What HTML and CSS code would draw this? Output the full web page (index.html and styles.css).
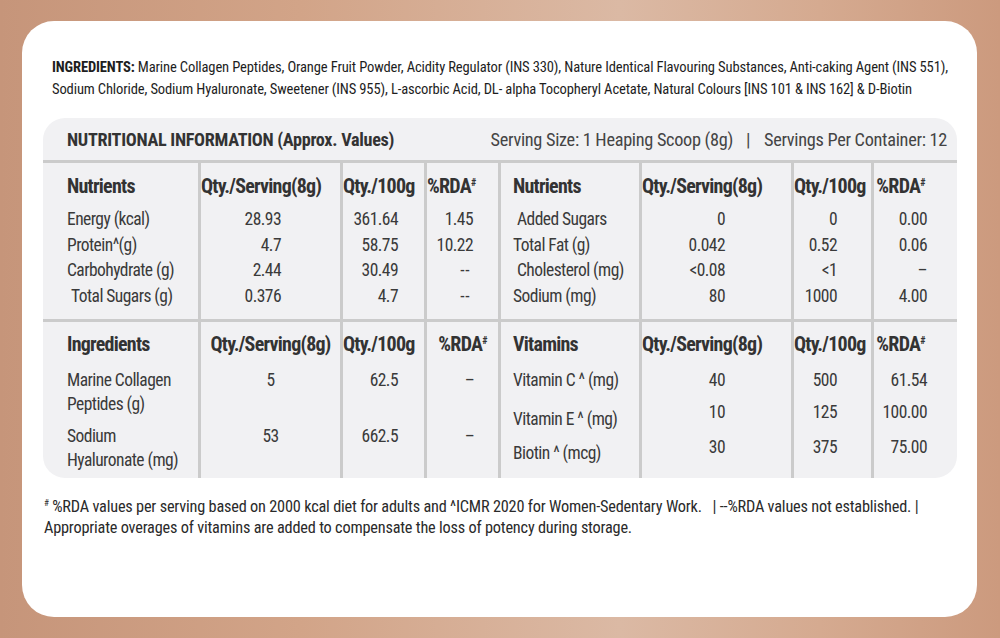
FILE: index.html
```html
<!DOCTYPE html>
<html lang="en">
<head>
<meta charset="utf-8">
<title>Nutritional Information</title>
<link rel="stylesheet" href="styles.css">
</head>
<body>
<div class="card">
  <div class="ingredients">
    <span class="line"><b>INGREDIENTS:</b> Marine Collagen Peptides, Orange Fruit Powder, Acidity Regulator (INS 330), Nature Identical Flavouring Substances, Anti-caking Agent (INS 551),</span>
    <span class="line">Sodium Chloride, Sodium Hyaluronate, Sweetener (INS 955), L-ascorbic Acid, DL- alpha Tocopheryl Acetate, Natural Colours [INS 101 &amp; INS 162] &amp; D-Biotin</span>
  </div>

  <div class="panel">
    <div class="panel-head">
      <span class="title">NUTRITIONAL INFORMATION (Approx. Values)</span>
      <span class="serving">Serving Size: 1 Heaping Scoop (8g) <span class="sep">|</span> Servings Per Container: 12</span>
    </div>

    <div class="section s1">
      <div class="col lbl first">
        <div class="h">Nutrients</div>
        <div class="r">Energy (kcal)</div>
        <div class="r">Protein^(g)</div>
        <div class="r">Carbohydrate (g)</div>
        <div class="r ind">Total Sugars (g)</div>
      </div>
      <div class="col val c-q1">
        <div class="h">Qty./Serving(8g)</div>
        <div class="r">28.93</div>
        <div class="r">4.7</div>
        <div class="r">2.44</div>
        <div class="r">0.376</div>
      </div>
      <div class="col val c-h1">
        <div class="h">Qty./100g</div>
        <div class="r">361.64</div>
        <div class="r">58.75</div>
        <div class="r">30.49</div>
        <div class="r">4.7</div>
      </div>
      <div class="col val c-d1">
        <div class="h">%RDA<sup>#</sup></div>
        <div class="r">1.45</div>
        <div class="r">10.22</div>
        <div class="r dash">--</div>
        <div class="r dash">--</div>
      </div>
      <div class="col lbl second">
        <div class="h">Nutrients</div>
        <div class="r ind">Added Sugars</div>
        <div class="r">Total Fat (g)</div>
        <div class="r ind">Cholesterol (mg)</div>
        <div class="r">Sodium (mg)</div>
      </div>
      <div class="col val c-q2">
        <div class="h">Qty./Serving(8g)</div>
        <div class="r">0</div>
        <div class="r">0.042</div>
        <div class="r">&lt;0.08</div>
        <div class="r">80</div>
      </div>
      <div class="col val c-h2">
        <div class="h">Qty./100g</div>
        <div class="r">0</div>
        <div class="r">0.52</div>
        <div class="r">&lt;1</div>
        <div class="r">1000</div>
      </div>
      <div class="col val c-d2">
        <div class="h">%RDA<sup>#</sup></div>
        <div class="r">0.00</div>
        <div class="r">0.06</div>
        <div class="r">&ndash;</div>
        <div class="r">4.00</div>
      </div>
    </div>

    <div class="section s2">
      <div class="col lbl first">
        <div class="h">Ingredients</div>
        <div class="blk">Marine Collagen<br>Peptides (g)</div>
        <div class="blk">Sodium<br>Hyaluronate (mg)</div>
      </div>
      <div class="col val center">
        <div class="h">Qty./Serving(8g)</div>
        <div class="blk">5</div>
        <div class="blk">53</div>
      </div>
      <div class="col val c-h1">
        <div class="h">Qty./100g</div>
        <div class="blk">62.5</div>
        <div class="blk">662.5</div>
      </div>
      <div class="col val center rda-dash">
        <div class="h">%RDA<sup>#</sup></div>
        <div class="blk">&ndash;</div>
        <div class="blk">&ndash;</div>
      </div>
      <div class="col lbl second">
        <div class="h">Vitamins</div>
        <div class="vl vl-a">Vitamin C ^ (mg)</div>
        <div class="vl vl-b">Vitamin E ^ (mg)</div>
        <div class="vl">Biotin ^ (mcg)</div>
      </div>
      <div class="col val c-q2">
        <div class="h">Qty./Serving(8g)</div>
        <div class="vv vv-a">40</div>
        <div class="vv vv-b">10</div>
        <div class="vv">30</div>
      </div>
      <div class="col val c-h2">
        <div class="h">Qty./100g</div>
        <div class="vv vv-a">500</div>
        <div class="vv vv-b">125</div>
        <div class="vv">375</div>
      </div>
      <div class="col val c-d2">
        <div class="h">%RDA<sup>#</sup></div>
        <div class="vv vv-a">61.54</div>
        <div class="vv vv-b">100.00</div>
        <div class="vv">75.00</div>
      </div>
    </div>
  </div>

  <div class="note">
    <span class="line"><sup>#</sup> %RDA values per serving based on 2000 kcal diet for adults and ^ICMR 2020 for Women-Sedentary Work. &nbsp;&nbsp;| --%RDA values not established. |</span>
    <span class="line">Appropriate overages of vitamins are added to compensate the loss of potency during storage.</span>
  </div>
</div>
</body>
</html>
```

FILE: styles.css
```css
html, body {
  margin: 0;
  padding: 0;
}

body {
  width: 1000px;
  height: 638px;
  overflow: hidden;
  background: linear-gradient(90deg, #c6957a 0%, #d2a488 30%, #dbb9a4 62%, #d5aa90 82%, #cc9a7e 100%);
  font-family: "Noto Sans Condensed", "Roboto Condensed", "Open Sans Condensed", "DejaVu Sans Condensed", sans-serif;
  color: #333;
  padding-top: 21px;
  box-sizing: border-box;
}

.card {
  margin-left: 22px;
  width: 955px;
  height: 596px;
  background: #fff;
  border-radius: 32px;
  box-sizing: border-box;
  padding-top: 35px;
}

.ingredients {
  padding-left: 30px;
  font-size: 14.6px;
  line-height: 22px;
  color: #1e1e1e;
  letter-spacing: -0.15px;
}

.ingredients b {
  font-weight: bold;
}

.line {
  display: block;
  white-space: nowrap;
}

.panel {
  margin: 18px 0 0 21px;
  width: 914px;
  height: 360px;
  background: #f1f1f3;
  border-radius: 22px;
  overflow: hidden;
}

.panel-head {
  height: 42px;
  border-bottom: 3px solid #cbcbcb;
  display: flex;
  align-items: center;
  justify-content: space-between;
  padding: 0 9px 0 24px;
  white-space: nowrap;
}

.title {
  font-weight: bold;
  font-size: 18.2px;
  letter-spacing: -0.3px;
  color: #333;
}

.serving {
  font-size: 18.3px;
  letter-spacing: -0.3px;
  color: #444;
  padding-right: 1px;
}

.sep {
  margin: 0 10px 0 9px;
}

.section {
  display: grid;
  grid-template-columns: 155px 142px 84px 74px 141px 152px 80px 86px;
  font-size: 17.5px;
  letter-spacing: -0.55px;
  color: #3a3a3a;
}

.s1 {
  height: 156px;
  border-bottom: 3px solid #cbcbcb;
}

.s2 {
  height: 156px;
}

.col {
  border-left: 3px solid #cbcbcb;
  padding-top: 10px;
  white-space: nowrap;
}

.s2 .col {
  padding-top: 9px;
}

.col.first {
  border-left: none;
  padding-left: 24px;
}

.col.second {
  padding-left: 12px;
}

.h {
  line-height: 26px;
  font-size: 20px;
  font-weight: bold;
  color: #333;
  text-align: center;
  margin-bottom: 8px;
  letter-spacing: -0.75px;
}

.s2 .h {
  margin-bottom: 11px;
}

.lbl .h {
  text-align: left;
}

.h sup {
  font-size: 10px;
  vertical-align: 7px;
  line-height: 0;
}

.r {
  line-height: 25.5px;
}

.ind {
  padding-left: 4px;
}

.val .r,
.val .blk,
.val .vv {
  text-align: right;
}

.c-q1 { padding-right: 59px; }
.c-h1 { padding-right: 26px; }
.c-d1 { padding-right: 25px; }
.c-q2 { padding-right: 66px; }
.c-h2 { padding-right: 34px; }
.c-d2 { padding-right: 30px; }

.c-d1 .dash {
  padding-right: 3px;
  letter-spacing: 0.5px;
}

.val.center .blk {
  text-align: center;
}

.rda-dash .blk {
  padding-left: 14px;
}

.blk {
  line-height: 24px;
  height: 56px;
}

.vl {
  line-height: 24px;
}

.vl-a { height: 39px; }
.vl-b { height: 34px; }

.vv {
  line-height: 24px;
}

.vv-a { height: 32px; }
.vv-b { height: 35px; }

.note {
  margin-top: 18px;
  padding-left: 22px;
  font-size: 16.3px;
  line-height: 21px;
  color: #2a2a2a;
  letter-spacing: -0.2px;
}

.note sup {
  font-size: 9px;
  vertical-align: 6px;
  line-height: 0;
}
```
